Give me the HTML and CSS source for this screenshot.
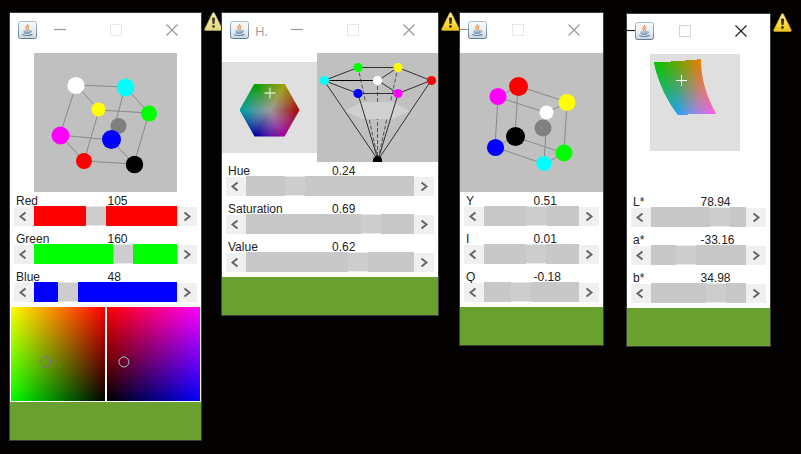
FILE: index.html
```html
<!DOCTYPE html>
<html lang="en">
<head>
<meta charset="utf-8">
<meta name="viewport" content="width=device-width, initial-scale=1">
<title>Color spaces</title>
<link rel="stylesheet" href="styles.css">
</head>
<body>
<svg class="symbols" aria-hidden="true">
  <defs>
    <linearGradient id="tile" x1="0" y1="0" x2="0" y2="1"><stop offset="0" stop-color="#f8fafb"/><stop offset="0.6" stop-color="#e9edf0"/><stop offset="1" stop-color="#c9d4de"/></linearGradient>
    <linearGradient id="tileEdge" x1="0" y1="0" x2="0" y2="1"><stop offset="0" stop-color="#a9bccb"/><stop offset="1" stop-color="#5d7b97"/></linearGradient>
    <linearGradient id="alert" x1="0" y1="0" x2="0" y2="1"><stop offset="0" stop-color="#fff3a0"/><stop offset="0.6" stop-color="#fbdc3c"/><stop offset="1" stop-color="#eec21c"/></linearGradient>
    <linearGradient id="alertPale" x1="0" y1="0" x2="0" y2="1"><stop offset="0" stop-color="#f4eeb4"/><stop offset="1" stop-color="#e4d87c"/></linearGradient>
    <symbol id="java" viewBox="0 0 19 18">
      <rect x="0.5" y="0.5" width="18" height="17" rx="2" fill="url(#tile)" stroke="url(#tileEdge)"/>
      <path d="M9.6 2.8c1.2 1.7-2.9 2.6-1.6 4.6.3.6.9.9 1 1.5M11.4 4.8c-2.2 1.2-1.6 1.8-1 2.7.3.6 0 1-.5 1.4" fill="none" stroke="#e5924f" stroke-width="1.2"/>
      <path d="M5.6 9.5h6.6v1.6c0 1.2-1 1.8-1.6 1.8H7.3c-1 0-1.7-.8-1.7-1.8z" fill="#7f9db6"/>
      <path d="M12.2 9.8c1.9-.5 2.4 1.3-.7 2.1" fill="none" stroke="#6d8ca8"/>
      <path d="M4.4 13.3c1.5 1.6 8 1.6 10 0" fill="none" stroke="#5e82a3" stroke-width="1.2"/>
      <path d="M6.5 10.8h4.6" stroke="#d7e1e9" stroke-width="0.7"/>
    </symbol>
    <symbol id="min" viewBox="0 0 12 12"><path d="M0 5.5h12" stroke="currentColor" stroke-width="1.2"/></symbol>
    <symbol id="max" viewBox="0 0 12 12"><rect x="0.5" y="0.5" width="11" height="11" fill="none" stroke="currentColor"/></symbol>
    <symbol id="close" viewBox="0 0 12 12"><path d="M0.5 0.5l11 11M11.5 0.5l-11 11" stroke="currentColor" stroke-width="1.2"/></symbol>
    <symbol id="prev" viewBox="0 0 20 19"><path d="M11.5 5.5L6.5 9.5l5 4" fill="none" stroke="currentColor" stroke-width="2"/></symbol>
    <symbol id="next" viewBox="0 0 20 19"><path d="M7.5 5.5l5 4-5 4" fill="none" stroke="currentColor" stroke-width="2"/></symbol>
    <symbol id="mark" viewBox="0 0 19 19"><path d="M9.5 5.5c1.4 0 1.7.6 1.600 1.600l-.6 4.900H8.500L7.900 7.100c-.1-1 .2-1.600 1.600-1.600z"/><circle cx="9.5" cy="14.500" r="1.400"/></symbol>
  </defs>
</svg>

<main class="desktop">
  <svg class="warning warning-rgb" viewBox="0 0 19 19" role="img" aria-label="Warning"><path d="M8.500 1.200c.5-.8 1.500-.8 2 0l7.800 15.800c.3.700 0 1.500-.9 1.500H1.600c-.9 0-1.200-.8-.9-1.500z" fill="url(#alertPale)" stroke="#bdb163" stroke-width="0.6"/><use href="#mark" fill="#4b4a30"/></svg>
  <svg class="warning warning-hsv" viewBox="0 0 19 19" role="img" aria-label="Warning"><path d="M8.500 1.200c.5-.8 1.500-.8 2 0l7.800 15.800c.3.700 0 1.500-.9 1.500H1.600c-.9 0-1.200-.8-.9-1.500z" fill="url(#alert)" stroke="#c9a72c" stroke-width="0.6"/><use href="#mark" fill="#3a3208"/></svg>
  <svg class="warning warning-lab" viewBox="0 0 19 19" role="img" aria-label="Warning"><path d="M8.500 1.200c.5-.8 1.500-.8 2 0l7.800 15.800c.3.700 0 1.500-.9 1.500H1.600c-.9 0-1.200-.8-.9-1.500z" fill="url(#alert)" stroke="#c9a72c" stroke-width="0.6"/><use href="#mark" fill="#3a3208"/></svg>

  <section class="window window-rgb">
    <header class="titlebar">
      <div class="brand"><svg class="app-icon"><use href="#java"/></svg></div>
      <div class="controls">
        <button class="control" aria-label="Minimize"><svg><use href="#min"/></svg></button>
        <button class="control faint" aria-label="Maximize"><svg><use href="#max"/></svg></button>
        <button class="control" aria-label="Close"><svg><use href="#close"/></svg></button>
      </div>
    </header>
    <div class="stage">
      <svg class="cube" viewBox="0 0 143 139">
        <path class="edges" d="M42 32L91 34L115 60L65 57zM26 82L77 87L100 111L50 108zM42 32L26 82M91 34L77 87M115 60L100 111M65 57L50 108"/>
        <circle cx="84.500" cy="73" r="8" fill="#808080"/>
        <circle cx="42" cy="32.500" r="8.600" fill="#fff"/>
        <circle cx="91.500" cy="34.500" r="8.900" fill="#0ff"/>
        <circle cx="64.500" cy="56.500" r="7" fill="#ff0"/>
        <circle cx="115" cy="60.500" r="8" fill="#0f0"/>
        <circle cx="26.500" cy="82.500" r="9" fill="#f0f"/>
        <circle cx="77.500" cy="86.500" r="9.500" fill="#00f"/>
        <circle cx="50" cy="108" r="8" fill="#f00"/>
        <circle cx="100.500" cy="111.500" r="8.700" fill="#000"/>
      </svg>
    </div>
    <div class="sliders">
      <div class="channel red">
        <div class="caption"><label for="red">Red</label><output for="red">105</output></div>
        <div class="scroller"><button aria-label="Less red"><svg><use href="#prev"/></svg></button><input type="range" id="red" min="0" max="248" value="105"><button aria-label="More red"><svg><use href="#next"/></svg></button></div>
      </div>
      <div class="channel green">
        <div class="caption"><label for="green">Green</label><output for="green">160</output></div>
        <div class="scroller"><button aria-label="Less green"><svg><use href="#prev"/></svg></button><input type="range" id="green" min="0" max="248" value="160"><button aria-label="More green"><svg><use href="#next"/></svg></button></div>
      </div>
      <div class="channel blue">
        <div class="caption"><label for="blue">Blue</label><output for="blue">48</output></div>
        <div class="scroller"><button aria-label="Less blue"><svg><use href="#prev"/></svg></button><input type="range" id="blue" min="0" max="248" value="48"><button aria-label="More blue"><svg><use href="#next"/></svg></button></div>
      </div>
    </div>
    <div class="planes">
      <div class="plane red-green"><svg viewBox="0 0 94 94"><circle cx="35" cy="55" r="5" fill="none" stroke="#8a63b4"/></svg></div>
      <div class="plane red-blue"><svg viewBox="0 0 94 94"><circle cx="17" cy="55" r="5" fill="none" stroke="#96cdb8"/></svg></div>
    </div>
    <div class="swatch"></div>
  </section>

  <section class="window window-hsv">
    <header class="titlebar">
      <div class="brand"><svg class="app-icon"><use href="#java"/></svg><span class="title">H.</span></div>
      <div class="controls">
        <button class="control" aria-label="Minimize"><svg><use href="#min"/></svg></button>
        <button class="control faint" aria-label="Maximize"><svg><use href="#max"/></svg></button>
        <button class="control" aria-label="Close"><svg><use href="#close"/></svg></button>
      </div>
    </header>
    <div class="stage-pair">
      <div class="wheel">
        <div class="hexagon"></div>
        <svg viewBox="0 0 95 91"><path d="M42.500 31h11M48 25.500v11" stroke="#d3e5bd" stroke-width="1.300"/></svg>
      </div>
      <svg class="cone" viewBox="0 0 121 109">
        <path class="dashed" d="M41 14L61 107M81 14L61 107M60.500 27V107"/>
        <path d="M28 58L45 49H76L93 58L76 66H45z" fill="#d0d0d0"/>
        <path class="rim" d="M7 27.500L41 14.500H81L114 27.500L81 40.500H41zM61 27.500L81 14.500M61 27.500L81 40.500M7 27.500L61 107L114 27.500M41 41L61 107L81 41"/>
        <path d="M7 27.500H61" stroke="#000"/>
        <circle cx="41" cy="14.500" r="4.600" fill="#0f0"/>
        <circle cx="81" cy="14.500" r="4.600" fill="#ff0"/>
        <circle cx="7.500" cy="27.500" r="4.600" fill="#0ff"/>
        <circle cx="60.500" cy="27.500" r="4.600" fill="#fff"/>
        <circle cx="114.500" cy="27.500" r="4.600" fill="#f00"/>
        <circle cx="41" cy="40.500" r="4.600" fill="#00f"/>
        <circle cx="81" cy="40.500" r="4.600" fill="#f0f"/>
        <circle cx="60.500" cy="107.500" r="4.600" fill="#000"/>
      </svg>
    </div>
    <div class="sliders">
      <div class="channel">
        <div class="caption"><label for="hue">Hue</label><output for="hue">0.24</output></div>
        <div class="scroller"><button aria-label="Less hue"><svg><use href="#prev"/></svg></button><input type="range" id="hue" min="0" max="0.9" step="0.001" value="0.235"><button aria-label="More hue"><svg><use href="#next"/></svg></button></div>
      </div>
      <div class="channel">
        <div class="caption"><label for="saturation">Saturation</label><output for="saturation">0.69</output></div>
        <div class="scroller"><button aria-label="Less saturation"><svg><use href="#prev"/></svg></button><input type="range" id="saturation" min="0" max="0.9" step="0.001" value="0.699"><button aria-label="More saturation"><svg><use href="#next"/></svg></button></div>
      </div>
      <div class="channel">
        <div class="caption"><label for="value">Value</label><output for="value">0.62</output></div>
        <div class="scroller"><button aria-label="Less value"><svg><use href="#prev"/></svg></button><input type="range" id="value" min="0" max="0.9" step="0.001" value="0.62"><button aria-label="More value"><svg><use href="#next"/></svg></button></div>
      </div>
    </div>
    <div class="swatch"></div>
  </section>

  <section class="window window-yiq">
    <header class="titlebar">
      <div class="brand"><svg class="app-icon"><use href="#java"/></svg></div>
      <div class="controls">
        <button class="control" aria-label="Minimize"><svg><use href="#min"/></svg></button>
        <button class="control faint" aria-label="Maximize"><svg><use href="#max"/></svg></button>
        <button class="control" aria-label="Close"><svg><use href="#close"/></svg></button>
      </div>
    </header>
    <div class="stage">
      <svg class="cube" viewBox="0 0 143 139">
        <path class="edges" d="M58 33L107 49L104 100L55 84zM38 44L87 60L84 111L35 94zM58 33L38 44M107 49L87 60M104 100L84 111M55 84L35 94"/>
        <circle cx="83" cy="75" r="8.500" fill="#808080"/>
        <circle cx="38" cy="43.500" r="8.600" fill="#f0f"/>
        <circle cx="58.500" cy="33.500" r="9.500" fill="#f00"/>
        <circle cx="107" cy="49.500" r="8.500" fill="#ff0"/>
        <circle cx="86.500" cy="59.500" r="7" fill="#fff"/>
        <circle cx="55.500" cy="83.500" r="9.500" fill="#000"/>
        <circle cx="35.500" cy="94.500" r="8.600" fill="#00f"/>
        <circle cx="104" cy="100" r="8.500" fill="#0f0"/>
        <circle cx="84" cy="110.500" r="7.600" fill="#0ff"/>
      </svg>
    </div>
    <div class="sliders">
      <div class="channel">
        <div class="caption"><label for="y">Y</label><output for="y">0.51</output></div>
        <div class="scroller"><button aria-label="Less Y"><svg><use href="#prev"/></svg></button><input type="range" id="y" min="0" max="0.9" step="0.01" value="0.51"><button aria-label="More Y"><svg><use href="#next"/></svg></button></div>
      </div>
      <div class="channel">
        <div class="caption"><label for="i">I</label><output for="i">0.01</output></div>
        <div class="scroller"><button aria-label="Less I"><svg><use href="#prev"/></svg></button><input type="range" id="i" min="-0.6" max="0.5" step="0.01" value="0.01"><button aria-label="More I"><svg><use href="#next"/></svg></button></div>
      </div>
      <div class="channel">
        <div class="caption"><label for="q">Q</label><output for="q">-0.18</output></div>
        <div class="scroller"><button aria-label="Less Q"><svg><use href="#prev"/></svg></button><input type="range" id="q" min="-0.52" max="0.42" step="0.01" value="-0.18"><button aria-label="More Q"><svg><use href="#next"/></svg></button></div>
      </div>
    </div>
    <div class="swatch"></div>
  </section>

  <section class="window window-lab active">
    <header class="titlebar">
      <div class="brand"><svg class="app-icon"><use href="#java"/></svg></div>
      <div class="controls">
        <button class="control" aria-label="Minimize"><svg><use href="#min"/></svg></button>
        <button class="control faint" aria-label="Maximize"><svg><use href="#max"/></svg></button>
        <button class="control" aria-label="Close"><svg><use href="#close"/></svg></button>
      </div>
    </header>
    <div class="stage stage-start">
      <svg class="gamut" viewBox="0 0 90 97">
        <defs>
          <linearGradient id="labTop" gradientUnits="userSpaceOnUse" x1="4" y1="0" x2="54" y2="0"><stop offset="0" stop-color="#00c800"/><stop offset="0.25" stop-color="#38b400"/><stop offset="0.6" stop-color="#8e9c00"/><stop offset="1" stop-color="#fa7800"/></linearGradient>
          <linearGradient id="labBottom" gradientUnits="userSpaceOnUse" x1="10" y1="0" x2="66" y2="0"><stop offset="0" stop-color="#00b4c8"/><stop offset="0.3" stop-color="#18a4ff"/><stop offset="0.6" stop-color="#8a8cf0"/><stop offset="1" stop-color="#ff5cf6"/></linearGradient>
          <linearGradient id="fade" gradientUnits="userSpaceOnUse" x1="0" y1="8" x2="0" y2="62"><stop offset="0" stop-color="#000"/><stop offset="0.5" stop-color="#777"/><stop offset="1" stop-color="#fff"/></linearGradient>
          <mask id="fadeMask" maskUnits="userSpaceOnUse" x="0" y="0" width="90" height="97"><rect width="90" height="97" fill="url(#fade)"/></mask>
          <clipPath id="gamutShape"><path d="M4 9V8H21V7H35V6H47V5H50L51 6C51 24 56 42 66 60H38V61H28C18 48 8 29 4 9z"/></clipPath>
        </defs>
        <g clip-path="url(#gamutShape)">
          <rect width="90" height="97" fill="url(#labTop)"/>
          <rect width="90" height="97" fill="url(#labBottom)" mask="url(#fadeMask)"/>
        </g>
        <path d="M26 26.500h11M31.500 21v11" stroke="#fff"/>
      </svg>
    </div>
    <div class="sliders">
      <div class="channel">
        <div class="caption"><label for="l-star">L*</label><output for="l-star">78.94</output></div>
        <div class="scroller"><button aria-label="Less L*"><svg><use href="#prev"/></svg></button><input type="range" id="l-star" min="0" max="100" step="0.01" value="78.94"><button aria-label="More L*"><svg><use href="#next"/></svg></button></div>
      </div>
      <div class="channel">
        <div class="caption"><label for="a-star">a*</label><output for="a-star">-33.16</output></div>
        <div class="scroller"><button aria-label="Less a*"><svg><use href="#prev"/></svg></button><input type="range" id="a-star" min="-100" max="98" step="0.01" value="-33.16"><button aria-label="More a*"><svg><use href="#next"/></svg></button></div>
      </div>
      <div class="channel">
        <div class="caption"><label for="b-star">b*</label><output for="b-star">34.98</output></div>
        <div class="scroller"><button aria-label="Less b*"><svg><use href="#prev"/></svg></button><input type="range" id="b-star" min="-100" max="84" step="0.01" value="34.98"><button aria-label="More b*"><svg><use href="#next"/></svg></button></div>
      </div>
    </div>
    <div class="swatch"></div>
  </section>
</main>
</body>
</html>
```

FILE: styles.css
```css
* {
  box-sizing: border-box;
}

body {
  margin: 0;
  background: #030200;
  color: #222;
  font: 12px/14px "Liberation Sans", Arial, sans-serif;
}

button {
  padding: 0;
  border: 0;
  background: none;
}

svg {
  display: block;
}

.symbols {
  position: absolute;
  width: 0;
  height: 0;
}

.desktop {
  position: relative;
  min-height: 100vh;
  overflow: hidden;
}

/* Windows float freely on the desktop */
.window {
  position: absolute;
  overflow: hidden;
  border: 1px solid #3c3c3c;
  background: #fff;
}

.window-rgb { left: 9px; top: 12px; width: 193px; }
.window-hsv { left: 221px; top: 12px; width: 218px; }
.window-yiq { left: 459px; top: 12px; width: 145px; }
.window-lab { left: 626px; top: 13px; width: 145px; }

.warning {
  position: absolute;
  top: 12px;
  width: 19px;
  height: 19px;
}

.warning-rgb { left: 204px; }
.warning-hsv { left: 441px; }
.warning-lab { left: 773px; top: 13px; }

/* Title bar: the brand lies over the controls when the window is narrow */
.titlebar {
  display: grid;
  grid-template-columns: minmax(0, 1fr);
  height: 40px;
}

.brand,
.controls {
  grid-area: 1 / 1;
  display: flex;
}

.brand {
  z-index: 1;
  justify-self: start;
  align-items: flex-start;
  gap: 6px;
  padding: 8px 0 0 8px;
}

.app-icon {
  width: 19px;
  height: 18px;
}

.title {
  color: #9c9c9c;
  font: 13px/20px "Open Sans", "Noto Sans", sans-serif;
}

.controls {
  justify-self: end;
  padding-right: 1px;
}

.control {
  display: flex;
  flex: none;
  justify-content: center;
  width: 56px;
  padding-top: 11px;
  color: #999;
}

.control svg {
  width: 12px;
  height: 12px;
}

.control.faint { color: #e8e8e8; }
.active .control { color: #222; }
.active .control.faint { color: #d4d4d4; }

/* Colour solids */
.stage {
  display: flex;
  justify-content: center;
  min-height: 139px;
}

.stage-start {
  justify-content: flex-start;
  padding-left: 23px;
}

.cube {
  width: 143px;
  height: 139px;
  background: #c0c0c0;
}

.edges {
  fill: none;
  stroke: #8a8a8a;
}

.gamut {
  width: 90px;
  height: 97px;
  background: #dfdfdf;
}

.stage-pair {
  display: flex;
  align-items: center;
}

.wheel {
  display: grid;
  flex: 1;
  height: 91px;
  background: #dfdfdf;
}

.wheel > * {
  grid-area: 1 / 1;
}

.wheel svg {
  z-index: 1;
}

.hexagon {
  align-self: center;
  justify-self: center;
  width: 60px;
  height: 53px;
  margin-top: 5px;
  background:
    radial-gradient(circle, #9c9c9c 0, rgba(156, 156, 156, 0) 29px),
    conic-gradient(from 90deg, #a80000, #a000a0, #0000a4, #00a0a0, #00a000, #a0a000, #a80000);
  clip-path: polygon(25% 0, 75% 0, 100% 50%, 75% 100%, 25% 100%, 0 50%);
}

.cone {
  width: 121px;
  height: 109px;
  background: #c0c0c0;
}

.rim {
  fill: none;
  stroke: #303030;
}

.dashed {
  fill: none;
  stroke: #555;
  stroke-dasharray: 4 2;
}

/* Channel sliders */
.sliders {
  display: flex;
  flex-direction: column;
  gap: 4px;
  padding: 0 4px 5px;
}

.caption {
  display: grid;
  grid-template-columns: 1fr 1fr;
}

.caption > * {
  padding: 2px 0 0 2px;
  height: 14px;
  line-height: 14px;
}

.scroller {
  display: flex;
  align-items: flex-end;
  height: 20px;
}

.scroller button {
  flex: none;
  width: 20px;
  height: 19px;
  background: #f0f0f0;
  color: #666;
}

.scroller svg {
  width: 20px;
  height: 19px;
}

.scroller input {
  flex: 1;
  min-width: 0;
  height: 20px;
  margin: 0;
  appearance: none;
  background: #c8c8c8;
}

.scroller input::-webkit-slider-thumb {
  appearance: none;
  width: 20px;
  height: 20px;
  border-top: 1px solid #e8e8e8;
  border-bottom: 1px solid #e8e8e8;
  background: #cdcdcd;
}

.red input { background: #f00; }
.green input { background: #0f0; }
.blue input { background: #00f; }

.planes {
  display: grid;
  grid-template-columns: 1fr 1fr;
  gap: 2px;
  padding: 0 1px 1px;
}

.plane {
  height: 94px;
}

.plane svg {
  width: 100%;
  height: 94px;
}

.red-green {
  background: linear-gradient(#f00, #000), linear-gradient(to right, #0f0, #000);
  background-blend-mode: screen;
}

.red-blue {
  background: linear-gradient(#f00, #000), linear-gradient(to right, #000, #00f);
  background-blend-mode: screen;
}

.swatch {
  height: 38px;
  background: #6aa030;
}
```
